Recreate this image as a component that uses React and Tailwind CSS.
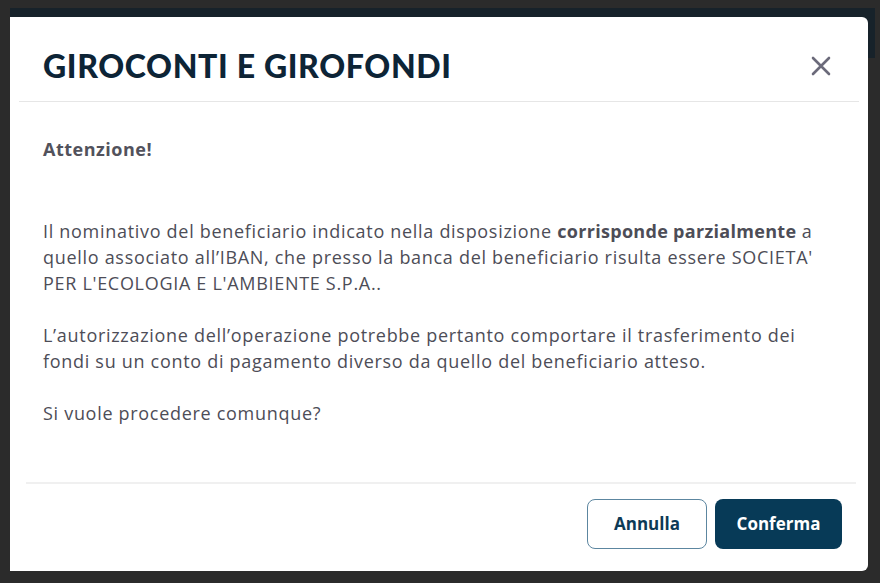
import React from "react";

function CloseIcon() {
  return (
    <svg width="20" height="20" viewBox="0 0 20 20" fill="none">
      <path
        d="M2 2L18 18M18 2L2 18"
        stroke="#6b6a7a"
        strokeWidth="2.6"
        strokeLinecap="round"
      />
    </svg>
  );
}

export default function App() {
  return (
    <div className="relative h-[583px] w-[880px] overflow-hidden bg-[#2b2b2b] font-['Open_Sans',sans-serif]">
      <div className="absolute left-[10px] top-[8px] h-[50px] w-[865px] bg-[#17222a]"></div>
      <div className="absolute left-[10px] top-[17px] flex h-[554px] w-[858px] flex-col rounded-r-md bg-white">
        <div className="mx-[9px] flex h-[85px] items-center justify-between border-b border-[#e6e6e6] pl-[24px] pr-[28px] pt-[14px]">
          <h1 className="font-['Lato',sans-serif] text-[32px] font-black tracking-[0.65px] text-[#0d2436]">
            GIROCONTI E GIROFONDI
          </h1>
          <button className="flex">
            <CloseIcon />
          </button>
        </div>

        <div className="flex-1 px-[33px] pt-[34px] text-[18px] leading-[26px] tracking-[0.7px] text-[#4d4d57]">
          <p className="font-bold tracking-[0.5px] text-[#52525c]">Attenzione!</p>
          <p className="mt-[56px]">
            Il nominativo del beneficiario indicato nella disposizione{" "}
            <span className="font-bold tracking-[0.3px]">corrisponde parzialmente</span> a
            quello associato all’IBAN, che presso la banca del beneficiario
            risulta essere SOCIETA' PER L'ECOLOGIA E L'AMBIENTE S.P.A..
          </p>
          <p className="mt-[26px]">
            L’autorizzazione dell’operazione potrebbe pertanto comportare il
            trasferimento dei fondi su un conto di pagamento diverso da quello
            del beneficiario atteso.
          </p>
          <p className="mt-[26px]">Si vuole procedere comunque?</p>
        </div>

        <div className="ml-[16px] mr-[12px] flex h-[89px] items-start justify-end gap-[8px] border-t-2 border-[#f0f0f0] pr-[14px] pt-[15px]">
          <button className="h-[50px] w-[120px] rounded-lg border border-[#5c86a0] text-[17px] font-bold text-[#0d3a56]">
            Annulla
          </button>
          <button className="h-[50px] w-[127px] rounded-lg bg-[#073a57] text-[17px] font-bold text-white">
            Conferma
          </button>
        </div>
      </div>
    </div>
  );
}
